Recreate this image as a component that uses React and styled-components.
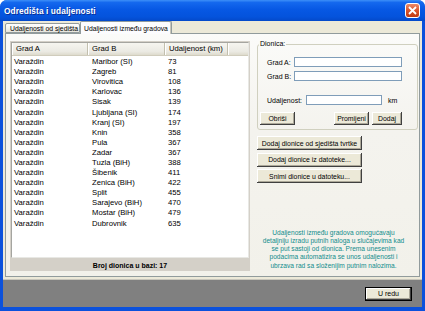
import React from "react";
import styled, { createGlobalStyle } from "styled-components";

const routes = [
  ["Varaždin", "Maribor (SI)", 73],
  ["Varaždin", "Zagreb", 81],
  ["Varaždin", "Virovitica", 108],
  ["Varaždin", "Karlovac", 136],
  ["Varaždin", "Sisak", 139],
  ["Varaždin", "Ljubljana (SI)", 174],
  ["Varaždin", "Kranj (SI)", 197],
  ["Varaždin", "Knin", 358],
  ["Varaždin", "Pula", 367],
  ["Varaždin", "Zadar", 367],
  ["Varaždin", "Tuzla (BiH)", 388],
  ["Varaždin", "Šibenik", 411],
  ["Varaždin", "Zenica (BiH)", 422],
  ["Varaždin", "Split", 455],
  ["Varaždin", "Sarajevo (BiH)", 470],
  ["Varaždin", "Mostar (BiH)", 479],
  ["Varaždin", "Dubrovnik", 635],
];

const columns = [
  { title: "Grad A", width: 76 },
  { title: "Grad B", width: 77 },
  { title: "Udaljenost (km)", width: 63 },
];

const App = () => (
  <>
    <GlobalStyle />
    <Window>
      <TitleBar>
        <Title>Odredišta i udaljenosti</Title>
        <CloseButton>
          <svg width="9" height="9" viewBox="0 0 9 9">
            <path d="M1 1 L8 8 M8 1 L1 8" stroke="#fff" strokeWidth="1.8" />
          </svg>
        </CloseButton>
      </TitleBar>
      <Frame>
        <Client>
          <TabStrip>
            <Tab>Udaljenosti od sjedišta</Tab>
            <Tab active>Udaljenosti između gradova</Tab>
          </TabStrip>
          <Panel>
            <ListBox>
              <ListView>
                <HeaderRow>
                  {columns.map((c) => (
                    <HeaderCell key={c.title} width={c.width}>
                      {c.title}
                    </HeaderCell>
                  ))}
                  <HeaderFill />
                </HeaderRow>
                {routes.map(([a, b, km], i) => (
                  <Row key={i}>
                    <Cell width={76} pad={2}>{a}</Cell>
                    <Cell width={77} pad={4}>{b}</Cell>
                    <Cell width={63} pad={3}>{km}</Cell>
                  </Row>
                ))}
              </ListView>
              <Status>Broj dionica u bazi: 17</Status>
            </ListBox>
            <Side>
              <Group>
                <Legend>Dionica:</Legend>
                <Field top={10}>
                  <Label width={27}>Grad A:</Label>
                  <Input />
                </Field>
                <Field top={4}>
                  <Label width={27}>Grad B:</Label>
                  <Input />
                </Field>
                <Field top={14}>
                  <Label width={39}>Udaljenost:</Label>
                  <Input width={76} />
                  <Unit>km</Unit>
                </Field>
                <ButtonRow>
                  <Button width={35}>Obriši</Button>
                  <ButtonPair>
                    <Button width={35}>Promijeni</Button>
                    <Button width={30}>Dodaj</Button>
                  </ButtonPair>
                </ButtonRow>
              </Group>
              <ActionList>
                <Button width={105} tall>Dodaj dionice od sjedišta tvrtke</Button>
                <Button width={105} tall>Dodaj dionice iz datoteke...</Button>
                <Button width={105} tall>Snimi dionice u datoteku...</Button>
              </ActionList>
              <Info>
                Udaljenosti između gradova omogućavaju
                <br />
                detaljniju izradu putnih naloga u slučajevima kad
                <br />
                se put sastoji od dionica. Prema unesenim
                <br />
                podacima automatizira se unos udaljenosti i
                <br />
                ubrzava rad sa složenijim putnim nalozima.
              </Info>
            </Side>
          </Panel>
        </Client>
        <Footer>
          <DefaultButton>U redu</DefaultButton>
        </Footer>
      </Frame>
    </Window>
  </>
);

const GlobalStyle = createGlobalStyle`
  html, body {
    margin: 0;
    padding: 0;
    background: #ffffff;
  }
  body {
    font-family: "Liberation Sans", Arial, sans-serif;
    color: #000;
  }
`;

const Window = styled.div`
  width: 425px;
  height: 311px;
  display: flex;
  flex-direction: column;
  background: #0b51dc;
  border-radius: 7px 7px 0 0;
  overflow: hidden;
`;

const TitleBar = styled.div`
  height: 21px;
  flex: none;
  display: flex;
  align-items: center;
  justify-content: space-between;
  padding: 0 5px 0 4px;
  box-sizing: border-box;
  background: linear-gradient(
    180deg,
    #3d8ff8 0%,
    #1468ee 12%,
    #0758e4 45%,
    #0453dc 80%,
    #0449c9 100%
  );
`;

const Title = styled.span`
  color: #fff;
  font-weight: bold;
  font-size: 8.3px;
  letter-spacing: 0.1px;
  text-shadow: 1px 1px 0 #0a2f98;
`;

const CloseButton = styled.div`
  width: 15px;
  height: 15px;
  box-sizing: border-box;
  border: 1px solid #fff;
  border-radius: 3px;
  display: flex;
  align-items: center;
  justify-content: center;
  background: linear-gradient(180deg, #ec8a6a 0%, #d9552c 50%, #c0390f 100%);
`;

const Frame = styled.div`
  flex: 1;
  display: flex;
  flex-direction: column;
  padding: 0 3px 4px 3px;
  min-height: 0;
`;

const Client = styled.div`
  height: 258px;
  flex: none;
  display: flex;
  flex-direction: column;
  padding: 0 2px 2px 2px;
  box-sizing: border-box;
  background: #ece9d8;
`;

const TabStrip = styled.div`
  height: 12px;
  flex: none;
  display: flex;
  align-items: flex-end;
  position: relative;
  z-index: 1;
`;

const Tab = styled.div`
  height: ${(p) => (p.active ? 13 : 10)}px;
  margin-bottom: ${(p) => (p.active ? -1 : 0)}px;
  width: ${(p) => (p.active ? 92 : 75)}px;
  box-sizing: border-box;
  display: flex;
  align-items: center;
  padding-left: ${(p) => (p.active ? 3 : 4)}px;
  font-size: 6.8px;
  white-space: nowrap;
  border: 1px solid #919b9c;
  border-bottom: ${(p) => (p.active ? "none" : "1px solid #919b9c")};
  border-left: ${(p) => (p.active ? "1px solid #919b9c" : "1px solid #919b9c")};
  border-radius: 2px 2px 0 0;
  background: ${(p) =>
    p.active
      ? "#fcfcfe"
      : "linear-gradient(180deg, #ffffff 0%, #f3f2ec 60%, #e6e4db 100%)"};
  box-shadow: ${(p) => (p.active ? "inset -1px 0 0 #c8c6bc" : "none")};
`;

const Panel = styled.div`
  flex: 1;
  display: flex;
  gap: 7px;
  padding: 7px 1px 5px 4px;
  box-sizing: border-box;
  border: 1px solid #919b9c;
  background: linear-gradient(180deg, #fbfbf9 0%, #f4f3ee 40%, #f2f1ea 100%);
`;

const ListBox = styled.div`
  width: 240px;
  flex: none;
  display: flex;
  flex-direction: column;
  padding: 1px 1px 0 1px;
  box-sizing: border-box;
  background: #d4d0c8;
`;

const ListView = styled.div`
  flex: 1;
  background: #fff;
  border: 1px solid #a5a5a0;
  border-right-color: #e8e8e4;
  border-bottom-color: #e8e8e4;
  overflow: hidden;
`;

const HeaderRow = styled.div`
  display: flex;
  height: 12px;
  background: linear-gradient(180deg, #f6f5f0 0%, #ebeae3 70%, #dedbcd 100%);
  border-bottom: 1px solid #d0ccbc;
  margin-bottom: 1px;
`;

const HeaderCell = styled.div`
  width: ${(p) => p.width}px;
  flex: none;
  box-sizing: border-box;
  padding-left: 4px;
  font-size: 7.7px;
  line-height: 12px;
  white-space: nowrap;
  border-right: 1px solid #c2bfae;
  box-shadow: inset 1px 0 0 #fff;
`;

const HeaderFill = styled.div`
  flex: 1;
  box-shadow: inset 1px 0 0 #fff;
`;

const Row = styled.div`
  display: flex;
  height: 10.1px;
  align-items: center;
`;

const Cell = styled.div`
  width: ${(p) => p.width}px;
  flex: none;
  box-sizing: border-box;
  padding-left: ${(p) => p.pad}px;
  font-size: 7.7px;
  line-height: 10px;
  white-space: nowrap;
`;

const Status = styled.div`
  height: 13px;
  flex: none;
  display: flex;
  align-items: center;
  justify-content: center;
  padding-top: 1px;
  box-sizing: border-box;
  font-size: 7px;
  font-weight: bold;
`;

const Side = styled.div`
  flex: 1;
  display: flex;
  flex-direction: column;
  min-width: 0;
`;

const Group = styled.fieldset`
  margin: 0;
  padding: 0 15px 4px 0;
  border: 1px solid #d0d0bf;
  border-radius: 3px;
  display: flex;
  flex-direction: column;
`;

const Legend = styled.legend`
  padding: 0 1px;
  margin-left: 1px;
  font-size: 7px;
  line-height: 6px;
`;

const Field = styled.div`
  display: flex;
  align-items: center;
  height: 10px;
  margin-top: ${(p) => p.top}px;
  padding-left: 9px;
`;

const Label = styled.span`
  width: ${(p) => p.width}px;
  flex: none;
  font-size: 7px;
  white-space: nowrap;
`;

const Input = styled.div`
  height: 10px;
  box-sizing: border-box;
  ${(p) => (p.width ? `width: ${p.width}px; flex: none;` : "flex: 1;")}
  background: #fff;
  border: 1px solid #7f9db9;
`;

const Unit = styled.span`
  margin-left: 6px;
  font-size: 7px;
`;

const ButtonRow = styled.div`
  display: flex;
  justify-content: space-between;
  margin-top: 7px;
  padding-left: 2px;
`;

const ButtonPair = styled.div`
  display: flex;
  gap: 3px;
`;

const Button = styled.div`
  width: ${(p) => p.width}px;
  height: ${(p) => (p.tall ? 14 : 13)}px;
  flex: none;
  box-sizing: border-box;
  display: flex;
  align-items: center;
  justify-content: center;
  font-size: 6.9px;
  white-space: nowrap;
  background: #ece9d8;
  box-shadow: inset -1px -1px 0 #404040, inset 1px 1px 0 #ffffff,
    inset -2px -2px 0 #aca899;
`;

const ActionList = styled.div`
  display: flex;
  flex-direction: column;
  gap: 2.5px;
  margin-top: 6px;
`;

const Info = styled.div`
  margin-top: auto;
  padding: 0 8px 1px 0;
  text-align: center;
  font-size: 6.6px;
  line-height: 8.3px;
  white-space: nowrap;
  color: #118c8c;
`;

const Footer = styled.div`
  flex: 1;
  display: flex;
  align-items: center;
  justify-content: flex-end;
  padding-right: 10px;
  background: #808080;
  border-top: 1px solid #c8c6bc;
`;

const DefaultButton = styled.div`
  width: 47px;
  height: 14px;
  box-sizing: border-box;
  display: flex;
  align-items: center;
  justify-content: center;
  font-size: 7px;
  background: #ece9d8;
  border: 1px solid #000;
  box-shadow: inset -1px -1px 0 #404040, inset 1px 1px 0 #ffffff,
    inset -2px -2px 0 #aca899;
`;

export default App;
